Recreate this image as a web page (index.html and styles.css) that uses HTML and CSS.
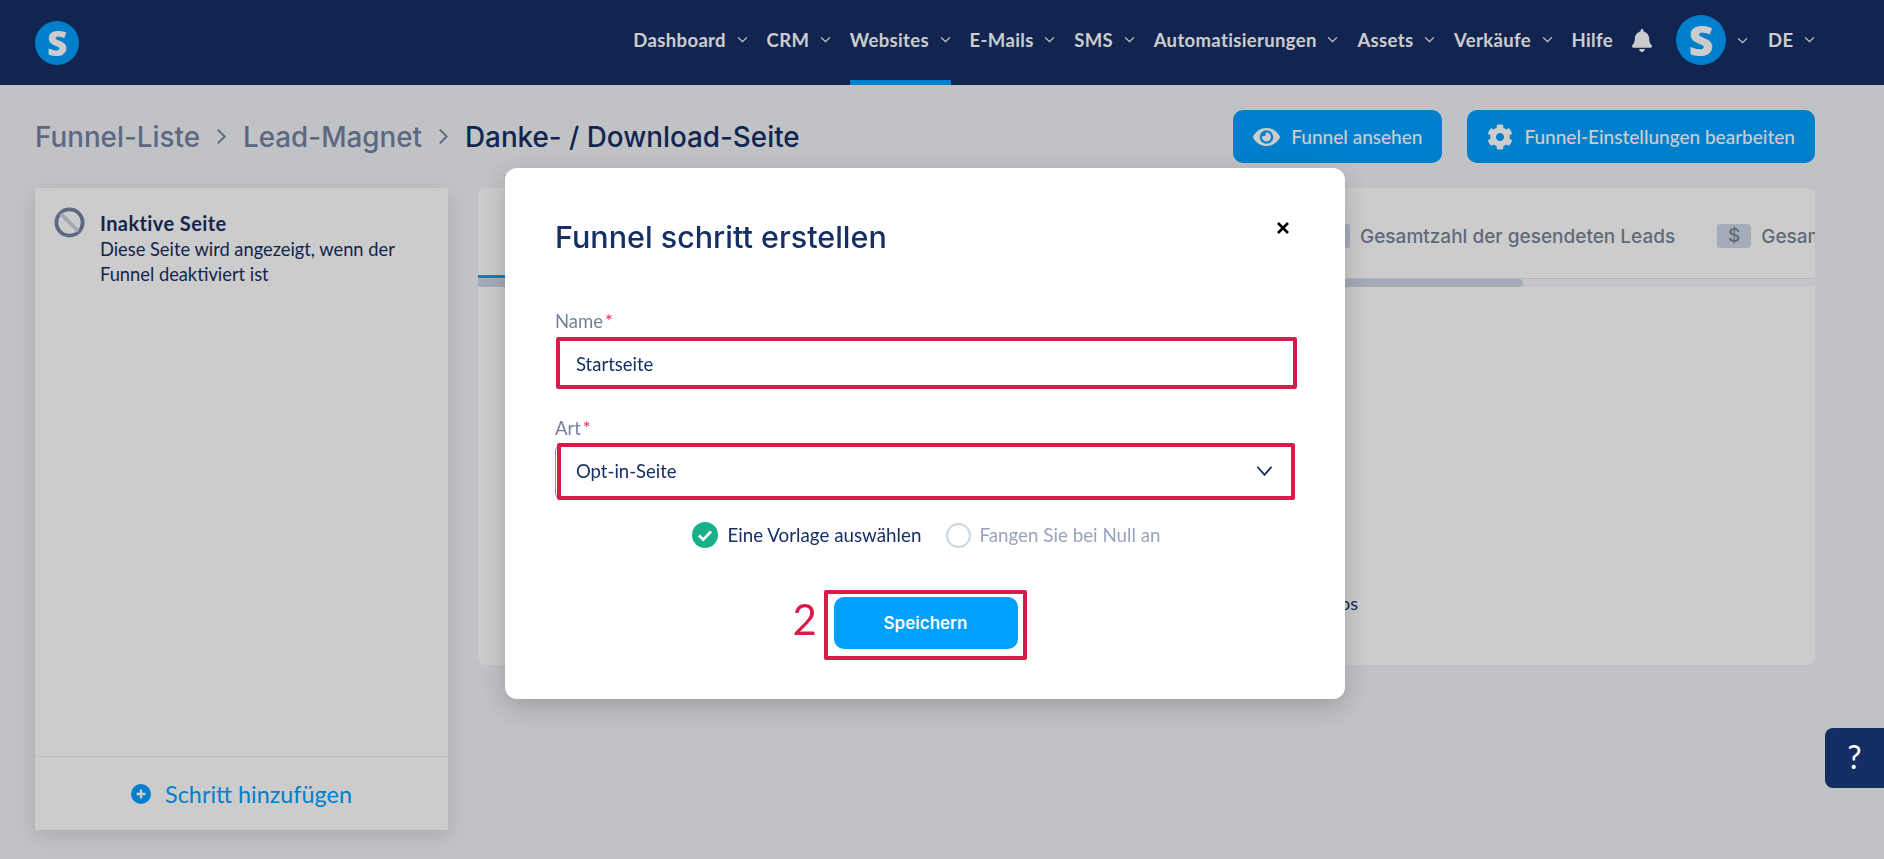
FILE: index.html
```html
<!DOCTYPE html>
<html lang="de">
<head>
    <meta charset="UTF-8">
    <meta name="viewport" content="width=device-width, initial-scale=1.0">
    <title>Funnel schritt erstellen</title>
    <link rel="stylesheet" href="styles.css">
</head>
<body>
    <div class="header">
        <div class="logo">S</div>
        <div class="nav">
            <div class="nav-item"><span>Dashboard</span><svg class="chev" viewBox="0 0 12 8"><path d="M1 1.5l5 5 5-5"/></svg></div>
            <div class="nav-item"><span>CRM</span><svg class="chev" viewBox="0 0 12 8"><path d="M1 1.5l5 5 5-5"/></svg></div>
            <div class="nav-item active"><span>Websites</span><svg class="chev" viewBox="0 0 12 8"><path d="M1 1.5l5 5 5-5"/></svg></div>
            <div class="nav-item"><span>E-Mails</span><svg class="chev" viewBox="0 0 12 8"><path d="M1 1.5l5 5 5-5"/></svg></div>
            <div class="nav-item"><span>SMS</span><svg class="chev" viewBox="0 0 12 8"><path d="M1 1.5l5 5 5-5"/></svg></div>
            <div class="nav-item"><span>Automatisierungen</span><svg class="chev" viewBox="0 0 12 8"><path d="M1 1.5l5 5 5-5"/></svg></div>
            <div class="nav-item"><span>Assets</span><svg class="chev" viewBox="0 0 12 8"><path d="M1 1.5l5 5 5-5"/></svg></div>
            <div class="nav-item"><span>Verkäufe</span><svg class="chev" viewBox="0 0 12 8"><path d="M1 1.5l5 5 5-5"/></svg></div>
            <div class="nav-item"><span>Hilfe</span></div>
            <svg class="bell" viewBox="0 0 448 512"><path d="M224 512c35.32 0 63.97-28.65 63.97-64H160.03c0 35.35 28.65 64 63.97 64zm215.39-149.71c-19.32-20.76-55.47-51.99-55.47-154.29 0-77.7-54.48-139.9-127.94-155.16V32c0-17.67-14.32-32-31.98-32s-31.98 14.33-31.98 32v20.84C118.56 68.1 64.08 130.3 64.08 208c0 102.3-36.15 133.53-55.47 154.29-6 6.45-8.66 14.16-8.61 21.71.11 16.4 12.98 32 32.1 32h383.8c19.12 0 32-15.6 32.1-32 .05-7.55-2.61-15.27-8.61-21.71z"/></svg>
            <div class="avatar-group">
                <div class="avatar">S</div>
                <svg class="chev" viewBox="0 0 12 8"><path d="M1 1.5l5 5 5-5"/></svg>
            </div>
            <div class="nav-item"><span>DE</span><svg class="chev" viewBox="0 0 12 8"><path d="M1 1.5l5 5 5-5"/></svg></div>
        </div>
    </div>

    <div class="main">
        <div class="toolbar">
            <div class="breadcrumb">
                <span>Funnel-Liste</span>
                <svg class="crumb-sep" viewBox="0 0 10 16"><path d="M1.5 1.5L8 8l-6.5 6.5"/></svg>
                <span>Lead-Magnet</span>
                <svg class="crumb-sep" viewBox="0 0 10 16"><path d="M1.5 1.5L8 8l-6.5 6.5"/></svg>
                <span class="current">Danke- / Download-Seite</span>
            </div>
            <div class="actions">
                <button class="action-btn">
                    <svg class="eye" viewBox="0 0 576 512"><path d="M572.52 241.4C518.29 135.59 410.93 64 288 64S57.68 135.64 3.48 241.41a32.35 32.35 0 0 0 0 29.19C57.71 376.41 165.07 448 288 448s230.32-71.64 284.52-177.41a32.35 32.35 0 0 0 0-29.19zM288 400a144 144 0 1 1 144-144 143.93 143.93 0 0 1-144 144zm0-240a95.31 95.31 0 0 0-25.31 3.79 47.85 47.85 0 0 1-66.9 66.9A95.78 95.78 0 1 0 288 160z"/></svg>
                    Funnel ansehen
                </button>
                <button class="action-btn">
                    <svg class="gear" viewBox="0 0 512 512"><path d="M487.4 315.7l-42.6-24.6c4.3-23.2 4.3-47 0-70.2l42.6-24.6c4.9-2.8 7.1-8.6 5.5-14-11.1-35.6-30-67.8-54.7-94.6-3.8-4.1-10-5.1-14.8-2.3L380.8 110c-17.9-15.4-38.5-27.3-60.8-35.1V25.8c0-5.6-3.9-10.5-9.4-11.7-36.7-8.2-74.3-7.8-109.2 0-5.5 1.2-9.4 6.1-9.4 11.7V75c-22.2 7.9-42.8 19.8-60.8 35.1L88.7 85.5c-4.9-2.8-11-1.9-14.8 2.3-24.7 26.7-43.6 58.9-54.7 94.6-1.7 5.4.6 11.2 5.5 14L67.3 221c-4.3 23.2-4.3 47 0 70.2l-42.6 24.6c-4.9 2.8-7.1 8.6-5.5 14 11.1 35.6 30 67.8 54.7 94.6 3.8 4.1 10 5.1 14.8 2.3l42.6-24.6c17.9 15.4 38.5 27.3 60.8 35.1v49.2c0 5.6 3.9 10.5 9.4 11.7 36.7 8.2 74.3 7.8 109.2 0 5.5-1.2 9.4-6.1 9.4-11.7v-49.2c22.2-7.9 42.8-19.8 60.8-35.1l42.6 24.6c4.9 2.8 11 1.9 14.8-2.3 24.7-26.7 43.6-58.9 54.7-94.6 1.5-5.5-.7-11.3-5.6-14.1zM256 336c-44.1 0-80-35.9-80-80s35.9-80 80-80 80 35.9 80 80-35.9 80-80 80z"/></svg>
                    Funnel-Einstellungen bearbeiten
                </button>
            </div>
        </div>

        <div class="content">
            <div class="steps-card">
                <div class="step">
                    <svg class="step-icon" viewBox="0 0 32 32"><circle class="ring" cx="16" cy="16" r="13.5"/><path class="slash" d="M7 7l18 18"/></svg>
                    <div>
                        <div class="step-title">Inaktive Seite</div>
                        <div class="step-desc">Diese Seite wird angezeigt, wenn der Funnel deaktiviert ist</div>
                    </div>
                </div>
                <div class="add-step">
                    <svg class="plus-icon" viewBox="0 0 20 20"><circle cx="10" cy="10" r="10"/><path d="M10 5.5v9M5.5 10h9"/></svg>
                    Schritt hinzufügen
                </div>
            </div>

            <div class="stats-card">
                <div class="tabs">
                    <div class="tab tab-first"></div>
                    <div class="tab"><span class="tab-badge"></span>Gesamtzahl der gesendeten Leads</div>
                    <div class="tab"><span class="tab-badge">$</span>Gesamtumsatz</div>
                </div>
                <div class="scrollbar"><div class="scroll-thumb"></div></div>
                <div class="stats-body">Videos</div>
            </div>
        </div>
    </div>

    <div class="backdrop">
        <div class="modal">
            <div class="modal-head">
                <h2>Funnel schritt erstellen</h2>
                <svg class="close" viewBox="0 0 14 14"><path d="M2 2l10 10M12 2L2 12"/></svg>
            </div>

            <label class="field-label label-name">Name<span class="req">*</span></label>
            <input class="field-input" type="text" value="Startseite">

            <label class="field-label label-art">Art<span class="req">*</span></label>
            <div class="field-select">
                <span>Opt-in-Seite</span>
                <svg class="select-arrow" viewBox="0 0 18 12"><path d="M1.5 1.5L9 10l7.5-8.5"/></svg>
                <div class="select-mark"></div>
            </div>

            <div class="radios">
                <div class="radio">
                    <svg class="radio-on" viewBox="0 0 26 26"><circle cx="13" cy="13" r="13"/><path d="M7 13.5l4.2 4.2L19 9.5"/></svg>
                    Eine Vorlage auswählen
                </div>
                <div class="radio off">
                    <span class="radio-off"></span>
                    Fangen Sie bei Null an
                </div>
            </div>

            <div class="save-row">
                <div class="save-mark">
                    <span class="step-number">2</span>
                    <button class="save-btn">Speichern</button>
                </div>
            </div>
        </div>
    </div>

    <div class="help-btn">?</div>
</body>
</html>
```

FILE: styles.css
```css
* {
    box-sizing: border-box;
}
html, body {
    height: 100%;
}
body {
    margin: 0;
    overflow: hidden;
    font-family: Lato, Arial, sans-serif;
    background-color: #f1f3f8;
    color: #162f64;
}
button {
    font-family: inherit;
    border: none;
    cursor: pointer;
}
.header {
    height: 85px;
    background-color: #162f64;
    display: flex;
    align-items: center;
    justify-content: space-between;
    padding: 0 69px 0 35px;
}
.logo {
    width: 44px;
    height: 44px;
    border-radius: 50%;
    background-color: #00a0ff;
    color: #fff;
    font-family: "Open Sans", sans-serif;
    font-size: 35px;
    font-weight: 800;
    line-height: 44px;
    text-align: center;
}
.nav {
    display: flex;
    align-items: center;
    height: 100%;
    gap: 19px;
    color: #fff;
    font-size: 18.5px;
    font-weight: 700;
    letter-spacing: 0.35px;
}
.nav-item {
    height: 100%;
    display: flex;
    align-items: center;
    gap: 10.6px;
    padding-bottom: 1px;
    border-bottom: 5px solid transparent;
}
.nav-item.active {
    border-bottom-color: #00a0ff;
}
.chev {
    width: 11px;
    height: 7px;
    flex: none;
    fill: none;
    stroke: #fff;
    stroke-width: 1.4;
}
.bell {
    width: 20px;
    height: 23px;
    fill: #fff;
    margin-bottom: 4px;
}
.avatar-group {
    display: flex;
    align-items: center;
    gap: 11px;
    margin: 0 1px 5px 5px;
}
.avatar {
    width: 50px;
    height: 50px;
    border-radius: 50%;
    background-color: #00a0ff;
    color: #fff;
    font-family: "Open Sans", sans-serif;
    font-size: 43px;
    font-weight: 800;
    line-height: 50px;
    text-align: center;
    letter-spacing: 0;
}
.main {
    padding: 25px 69px 0 35px;
}
.toolbar {
    display: flex;
    justify-content: space-between;
    align-items: center;
    height: 53px;
}
.breadcrumb {
    display: flex;
    align-items: center;
    gap: 16px;
    font-family: Inter, sans-serif;
    font-size: 27.8px;
    font-weight: 500;
    color: #7384a2;
}
.breadcrumb .current {
    color: #162f64;
}
.crumb-sep {
    width: 11px;
    height: 17px;
    fill: none;
    stroke: #7384a2;
    stroke-width: 1.8;
}
.actions {
    display: flex;
    gap: 25px;
}
.action-btn {
    height: 53px;
    padding: 0 20px;
    display: flex;
    align-items: center;
    gap: 11px;
    background-color: #00a0ff;
    color: #fff;
    border-radius: 10px;
    font-size: 19px;
    font-weight: 500;
}
.eye {
    width: 27px;
    height: 24px;
    fill: #fff;
}
.gear {
    width: 26px;
    height: 26px;
    fill: #fff;
}
.content {
    display: flex;
    gap: 30px;
    margin-top: 25px;
}
.steps-card {
    width: 413px;
    height: 642px;
    flex: none;
    background-color: #fff;
    box-shadow: 0 6px 20px rgba(0,0,0,0.12);
    display: flex;
    flex-direction: column;
    justify-content: space-between;
}
.step {
    display: flex;
    gap: 15px;
    padding: 19px 19px;
}
.step-icon {
    width: 31px;
    height: 31px;
    flex: none;
}
.step-icon .ring {
    fill: none;
    stroke: #7384a2;
    stroke-width: 4;
}
.step-icon .slash {
    stroke: #ccd3df;
    stroke-width: 4;
}
.step-title {
    font-size: 20px;
    font-weight: 700;
    letter-spacing: 0.4px;
    line-height: 32px;
}
.step-desc {
    font-size: 18.3px;
    line-height: 25px;
    margin-top: -2px;
    width: 310px;
}
.add-step {
    height: 74px;
    border-top: 1px solid #f0f0f0;
    display: flex;
    align-items: center;
    justify-content: center;
    gap: 14px;
    color: #00a0ff;
    font-size: 23.4px;
}
.plus-icon {
    width: 20px;
    height: 20px;
}
.plus-icon circle {
    fill: #00a0ff;
}
.plus-icon path {
    stroke: #fff;
    stroke-width: 2.4;
}
.stats-card {
    flex: 1;
    min-width: 0;
    height: 477px;
    background-color: #fff;
    border-radius: 8px;
    overflow: hidden;
}
.tabs {
    display: flex;
    height: 90px;
    overflow: hidden;
}
.tab {
    display: flex;
    align-items: center;
    flex: none;
    gap: 10px;
    margin-right: 42px;
    padding-top: 6px;
    font-family: Inter, sans-serif;
    font-size: 19px;
    font-weight: 500;
    color: #778598;
}
.tab-first {
    width: 796px;
    border-bottom: 3px solid #00a0ff;
}
.tab-badge {
    width: 34px;
    height: 24px;
    border-radius: 3px;
    background-color: #ccd8e7;
    text-align: center;
    line-height: 24px;
}
.scrollbar {
    height: 9px;
    background-color: #f6f7fa;
    border-top: 1px solid #dfe3ea;
    border-radius: 0 0 4px 4px;
}
.scroll-thumb {
    width: 1045px;
    height: 100%;
    background-color: #ccd8e7;
    border-radius: 0 4px 4px 0;
}
.stats-body {
    width: 880px;
    margin-top: 304px;
    text-align: right;
    font-size: 18px;
    line-height: 24px;
}
.backdrop {
    position: fixed;
    top: 0;
    right: 0;
    bottom: 0;
    left: 0;
    background-color: rgba(0,0,0,0.2);
}
.modal {
    width: 840px;
    height: 531px;
    margin: 168px 0 0 505px;
    padding: 48px 48px 0 51px;
    background-color: #fff;
    border-radius: 12px;
    box-shadow: 0 8px 28px rgba(0,0,0,0.2);
}
.modal-head {
    display: flex;
    justify-content: space-between;
    margin-left: -1px;
}
.modal-head h2 {
    margin: 0;
    font-family: Inter, sans-serif;
    font-size: 30.5px;
    font-weight: 500;
    line-height: 42px;
    color: #162f64;
}
.close {
    width: 14px;
    height: 14px;
    margin: 5px 7px 0 0;
    fill: none;
    stroke: #000;
    stroke-width: 2.6;
}
.field-label {
    display: block;
    margin-left: -1px;
    font-size: 18.5px;
    line-height: 24px;
    color: #73829a;
}
.label-name {
    margin-top: 51px;
}
.label-art {
    margin-top: 27px;
}
.req {
    color: #e5305f;
    margin-left: 2px;
}
.field-input {
    display: block;
    width: 100%;
    height: 52px;
    margin-top: 4px;
    padding: 1px 16px 0;
    border: 4px solid #d81b4a;
    border-radius: 2px;
    outline: none;
    font-family: inherit;
    font-size: 18.5px;
    color: #162f64;
}
.field-select {
    position: relative;
    height: 54px;
    margin: 5px 0 0 -1px;
    padding: 0 23px 2px 20px;
    display: flex;
    align-items: center;
    justify-content: space-between;
    border: 1px solid #3aa7f0;
    border-right-color: transparent;
    border-radius: 6px;
    font-size: 18.5px;
    color: #162f64;
}
.select-arrow {
    width: 17px;
    height: 12px;
    fill: none;
    stroke: #162f64;
    stroke-width: 2;
}
.select-mark {
    position: absolute;
    top: -3px;
    right: 1px;
    bottom: -2px;
    left: 1px;
    border: 4px solid #d81b4a;
    border-radius: 2px;
}
.radios {
    display: flex;
    justify-content: center;
    gap: 25px;
    margin-top: 23px;
}
.radio {
    display: flex;
    align-items: center;
    gap: 9px;
    font-size: 18.8px;
    line-height: 26px;
    color: #162f64;
}
.radio.off {
    color: #98a3bd;
    gap: 8px;
}
.radio-on {
    width: 26px;
    height: 26px;
}
.radio-on circle {
    fill: #17b088;
}
.radio-on path {
    fill: none;
    stroke: #fff;
    stroke-width: 2.6;
}
.radio-off {
    width: 25px;
    height: 25px;
    border: 2px solid #cdd6e4;
    border-radius: 50%;
}
.save-row {
    display: flex;
    justify-content: center;
    margin-top: 42px;
}
.save-mark {
    position: relative;
    margin-left: -3px;
    padding: 3px 5px 7px 6px;
    border: 4px solid #d81b4a;
    border-radius: 2px;
}
.step-number {
    position: absolute;
    top: -5px;
    left: -35px;
    font-size: 42px;
    line-height: 60px;
    color: #d81b4a;
}
.save-btn {
    display: block;
    width: 184px;
    height: 52px;
    background-color: #00a0ff;
    color: #fff;
    border-radius: 10px;
    font-family: Inter, sans-serif;
    font-size: 17px;
    font-weight: 600;
}
.help-btn {
    position: fixed;
    top: 728px;
    right: 0;
    width: 59px;
    height: 60px;
    background-color: #142d62;
    border-radius: 8px 0 0 8px;
    color: #fff;
    font-size: 32px;
    line-height: 58px;
    text-align: center;
}
```
